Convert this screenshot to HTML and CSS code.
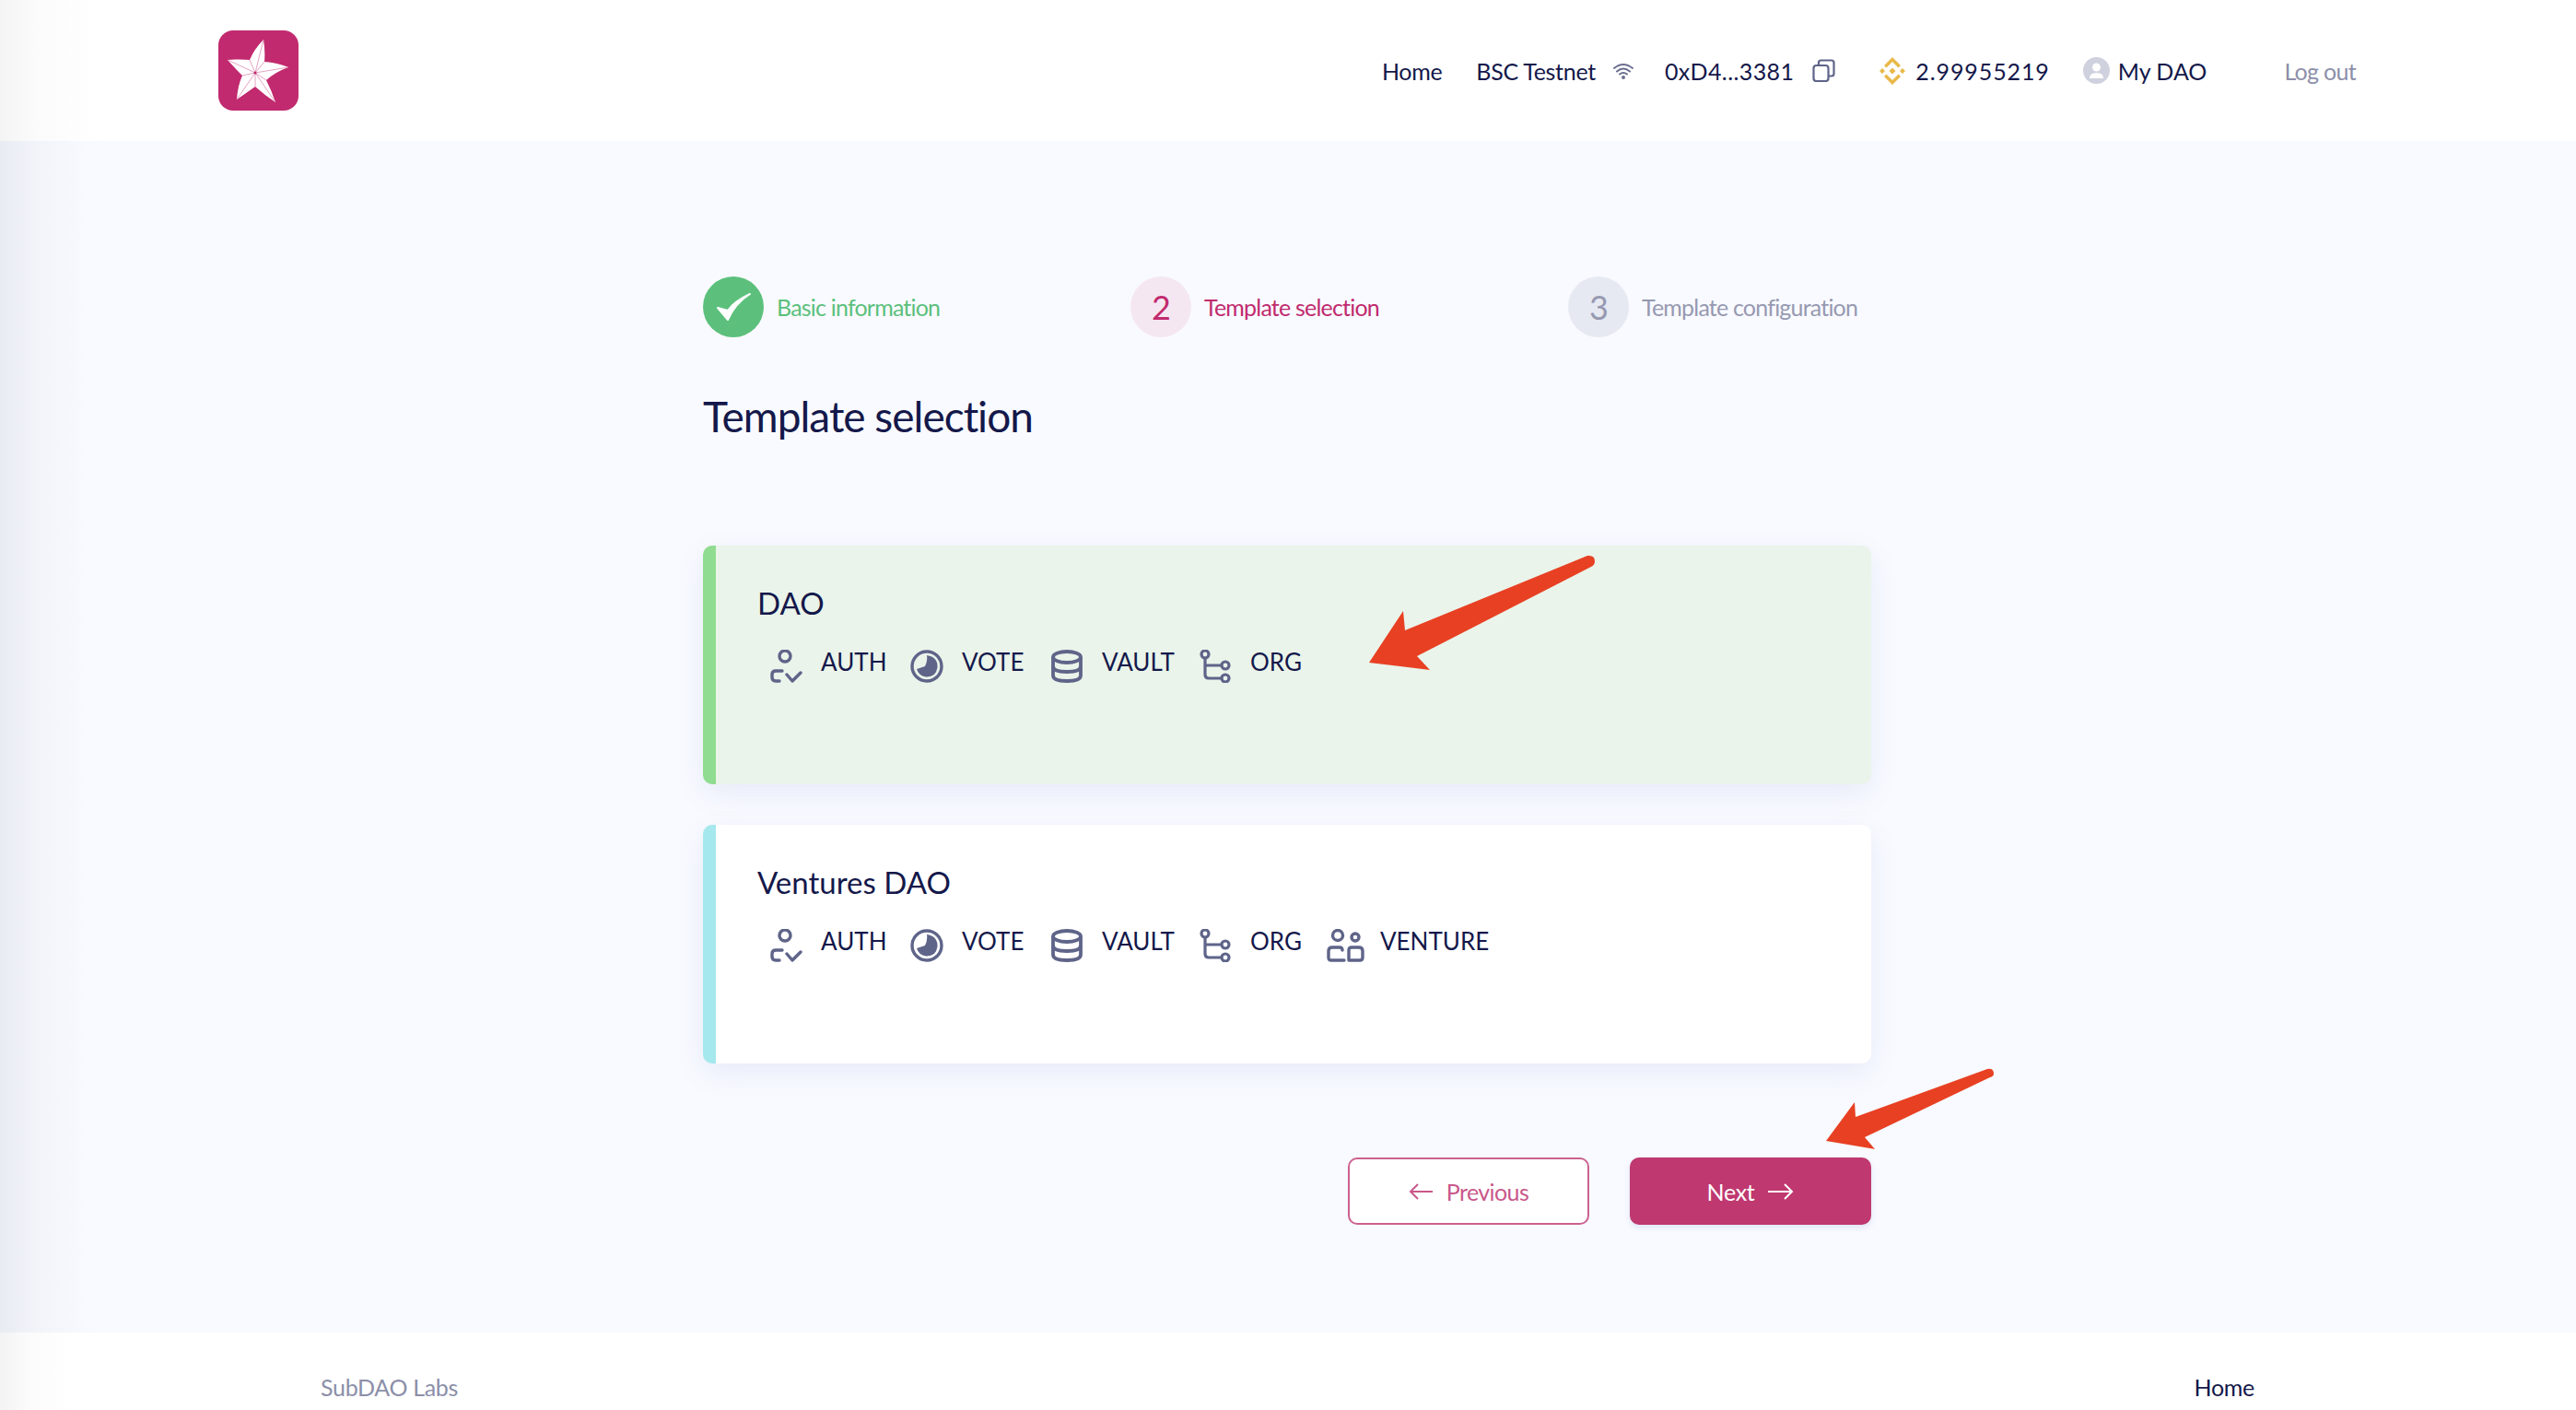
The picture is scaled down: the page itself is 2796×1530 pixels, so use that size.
FILE: index.html
```html
<!DOCTYPE html>
<html lang="en">
<head>
    <meta charset="UTF-8">
    <title>SubDAO</title>
    <link rel="stylesheet" href="styles.css">
</head>
<body>
    <div class="header">
        <svg class="logo" viewBox="0 0 87 87">
            <rect width="87" height="87" rx="16" fill="#c12a6e"/>
            <path d="M49 10Q51 22 50 34Q64 35 76 40Q62 45 52 54Q58 66 62 78Q50 70 40 61Q30 68 20 75Q21 60 26 49Q18 41 10 32Q23 31 34 32Q39 20 49 10Z" fill="#fff"/>
            <path d="M40 46L49 10M40 46L76 40M40 46L62 78M40 46L40 61M40 46L10 32M40 46L20 75M34 32L40 46L50 34M26 49L40 46L52 54" stroke="#dd8bb3" stroke-width=".8" fill="none"/>
            <circle cx="40" cy="46" r="1.500" fill="#c12a6e"/>
        </svg>
        <div class="nav">
            <span class="nav-home">Home</span>
            <span class="nav-net">BSC Testnet</span>
            <svg class="icon-wifi" viewBox="0 0 22 18" fill="none" stroke="#6a6e90" stroke-width="2" stroke-linecap="round">
                <path d="M1 6Q11 -2 21 6M4 9.500Q11 3.500 18 9.500M7 12.500Q11 9.500 15 12.500"/>
                <circle cx="11" cy="16" r="1" fill="#6a6e90"/>
            </svg>
            <span class="nav-addr">0xD4...3381</span>
            <svg class="icon-copy" viewBox="0 0 25 25" fill="none" stroke="#5f6489" stroke-width="2.200">
                <rect x="1.500" y="7" width="16" height="17" rx="3"/>
                <path d="M7 7V4Q7 1.500 9.500 1.500H21Q23.500 1.500 23.500 4V16Q23.500 18.500 21 18.500H17.500"/>
            </svg>
            <svg class="icon-bnb" viewBox="0 0 30 30" fill="#e9b949">
                <path d="M15 0L24 9L21.500 11.500L15 5L8.500 11.500L6 9ZM15 30L24 21L21.500 18.500L15 25L8.500 18.500L6 21Z"/>
                <path d="M15 11.500L18.500 15L15 18.500L11.500 15ZM4 12L7 15L4 18L1 15ZM26 12L29 15L26 18L23 15Z"/>
            </svg>
            <span class="nav-balance">2.99955219</span>
            <svg class="icon-avatar" viewBox="0 0 29 29">
                <circle cx="14.500" cy="14.500" r="14.500" fill="#cfd1de"/>
                <circle cx="14.500" cy="11" r="4.500" fill="#fff"/>
                <path d="M7 23Q7 17 14.500 17Q22 17 22 23Z" fill="#fff"/>
            </svg>
            <span class="nav-dao">My DAO</span>
            <span class="nav-logout">Log out</span>
        </div>
    </div>

    <div class="main">
        <div class="container">
            <div class="steps">
                <div class="step step-done">
                    <div class="step-num">
                        <svg viewBox="0 0 40 32" width="40" height="34"><path d="M3 17L14 30Q22 12 38 2Q21 10 14 20Z" fill="#fff" stroke="#fff" stroke-width="2" stroke-linejoin="round"/></svg>
                    </div>
                    <span>Basic information</span>
                </div>
                <div class="step step-active">
                    <div class="step-num">2</div>
                    <span>Template selection</span>
                </div>
                <div class="step step-todo">
                    <div class="step-num">3</div>
                    <span>Template configuration</span>
                </div>
            </div>

            <h1>Template selection</h1>

            <div class="card card-dao">
                <div class="card-name">DAO</div>
                <div class="chips">
                    <div class="chip chip-auth">
                        <svg class="chip-icon"><use href="#i-auth"/></svg>AUTH
                    </div>
                    <div class="chip chip-vote">
                        <svg class="chip-icon"><use href="#i-vote"/></svg>VOTE
                    </div>
                    <div class="chip chip-vault">
                        <svg class="chip-icon"><use href="#i-vault"/></svg>VAULT
                    </div>
                    <div class="chip chip-org">
                        <svg class="chip-icon"><use href="#i-org"/></svg>ORG
                    </div>
                </div>
            </div>

            <div class="card card-ventures">
                <div class="card-name">Ventures DAO</div>
                <div class="chips">
                    <div class="chip chip-auth">
                        <svg class="chip-icon"><use href="#i-auth"/></svg>AUTH
                    </div>
                    <div class="chip chip-vote">
                        <svg class="chip-icon"><use href="#i-vote"/></svg>VOTE
                    </div>
                    <div class="chip chip-vault">
                        <svg class="chip-icon"><use href="#i-vault"/></svg>VAULT
                    </div>
                    <div class="chip chip-org">
                        <svg class="chip-icon"><use href="#i-org"/></svg>ORG
                    </div>
                    <div class="chip chip-venture">
                        <svg class="chip-icon"><use href="#i-venture"/></svg>VENTURE
                    </div>
                </div>
            </div>

            <div class="buttons">
                <button class="btn btn-prev">
                    <svg width="26" height="20" viewBox="0 0 26 20" fill="none" stroke="currentColor" stroke-width="2"><path d="M26 10H2M10 2L2 10L10 18"/></svg>
                    Previous
                </button>
                <button class="btn btn-next">
                    Next
                    <svg width="28" height="20" viewBox="0 0 28 20" fill="none" stroke="currentColor" stroke-width="2"><path d="M0 10H26M18 2L26 10L18 18"/></svg>
                </button>
            </div>
        </div>
    </div>

    <div class="footer">
        <span class="footer-brand">SubDAO Labs</span>
        <span class="footer-home">Home</span>
    </div>

    <!-- red annotation arrows on top of the page -->
    <svg class="arrows" viewBox="0 0 2796 1530">
        <path d="M1486 719L1523 663L1525 684L1723 603Q1731 602 1731 609Q1731 613 1727 615L1538 712L1552 727Z" fill="#e84023"/>
        <path d="M1982 1238L2013 1196L2014 1212L2157 1160Q2164 1159 2164 1165Q2164 1168 2160 1169L2024 1234L2035 1247Z" fill="#e84023"/>
    </svg>

    <!-- icons used by the chips -->
    <svg class="icon-defs">
        <symbol id="i-auth" viewBox="0 0 36 36">
            <g fill="none" stroke="#5f6489" stroke-width="3.400" stroke-linecap="round" stroke-linejoin="round">
                <circle cx="17" cy="7" r="6"/>
                <path d="M14 23H7Q3 23 3 27V30Q3 34 7 34H11"/>
                <path d="M19 27L25 34L34 25"/>
            </g>
        </symbol>
        <symbol id="i-vote" viewBox="0 0 36 36">
            <circle cx="18" cy="18" r="16" fill="none" stroke="#5f6489" stroke-width="3.400"/>
            <path d="M18 6Q30 8 29.500 19Q28 30 17 29.500Q9 28 7 21L16 18Q19 12 18 6Z" fill="#5f6489"/>
        </symbol>
        <symbol id="i-vault" viewBox="0 0 36 36">
            <g fill="none" stroke="#5f6489" stroke-width="3.800">
                <ellipse cx="18" cy="8" rx="15" ry="6"/>
                <path d="M3 8V28Q3 34 18 34Q33 34 33 28V8"/>
                <path d="M3 18Q3 24 18 24Q33 24 33 18"/>
            </g>
        </symbol>
        <symbol id="i-org" viewBox="0 0 36 36">
            <g fill="none" stroke="#5f6489" stroke-width="3.200">
                <circle cx="7" cy="5" r="4"/>
                <circle cx="29" cy="17" r="4"/>
                <circle cx="29" cy="31" r="4"/>
                <path d="M7 9V27Q7 31 11 31H25M7 17H25"/>
            </g>
        </symbol>
        <symbol id="i-venture" viewBox="0 0 41 36">
            <g fill="none" stroke="#5f6489" stroke-width="3.400" stroke-linecap="round">
                <circle cx="12" cy="7" r="5.500"/>
                <circle cx="31" cy="9" r="4"/>
                <path d="M19 34H5Q2 34 2 31V24Q2 20 6 20H14Q17 20 17 23"/>
                <path d="M24 34H36Q39 34 39 31V24Q39 20 35 20H27Q24 20 24 23V34"/>
            </g>
        </symbol>
    </svg>
</body>
</html>
```

FILE: styles.css
```css
* {
    box-sizing: border-box;
}
html, body {
    margin: 0;
    height: 100%;
}
body {
    width: 2796px;
    height: 1530px;
    overflow: hidden;
    display: flex;
    flex-direction: column;
    position: relative;
    font-family: "Lato", sans-serif;
    color: #14184a;
    background-color: #f8faff;
}
.header {
    height: 153px;
    flex: none;
    display: flex;
    align-items: center;
    justify-content: space-between;
    padding: 0 239px 0 237px;
    background: linear-gradient(90deg, #f4f4f4 0, #fbfbfb 40px, #ffffff 110px);
}
.logo {
    width: 87px;
    height: 87px;
    margin-top: -1px;
}
.nav {
    display: flex;
    align-items: center;
    font-size: 25px;
    letter-spacing: -0.3px;
    line-height: 30px;
}
.nav svg {
    flex: none;
}
.nav-net {
    margin-left: 37px;
}
.icon-wifi {
    width: 22px;
    height: 18px;
    margin-left: 19px;
}
.nav-addr {
    margin-left: 34px;
    letter-spacing: 0.4px;
}
.icon-copy {
    width: 25px;
    height: 25px;
    margin-left: 20px;
}
.icon-bnb {
    width: 30px;
    height: 30px;
    margin-left: 47px;
}
.nav-balance {
    margin-left: 10px;
    letter-spacing: 0.9px;
}
.icon-avatar {
    width: 29px;
    height: 29px;
    margin-left: 36px;
}
.nav-dao {
    margin-left: 9px;
    letter-spacing: 0px;
}
.nav-logout {
    margin-left: 84px;
    color: #8c8fa9;
    letter-spacing: -0.7px;
}
.main {
    flex: 1;
    background: linear-gradient(90deg, #e9ebf3 0, #f2f4fa 40px, #f8faff 100px);
}
.container {
    width: 1268px;
    margin-left: 763px;
    padding-top: 147px;
}
.steps {
    display: grid;
    grid-template-columns: 464px 475px 1fr;
}
.step {
    display: flex;
    align-items: center;
    font-size: 25px;
    letter-spacing: -0.8px;
}
.step-num {
    width: 66px;
    height: 66px;
    border-radius: 50%;
    margin-right: 14px;
    display: flex;
    align-items: center;
    justify-content: center;
    font-size: 36px;
}
.step-done {
    color: #5cc07c;
}
.step-done .step-num {
    background-color: #5cc07c;
}
.step-active {
    color: #c12a6e;
}
.step-active .step-num {
    background-color: #f5e7f1;
}
.step-todo {
    color: #9799b1;
}
.step-todo .step-num {
    background-color: #e6e9f1;
}
h1 {
    font-size: 46px;
    font-weight: 400;
    line-height: 56px;
    letter-spacing: -1px;
    margin: 58px 0 112px;
}
.card {
    height: 259px;
    border-radius: 10px;
    border-left: 14px solid;
    padding: 42px 0 0 45px;
    margin-bottom: 44px;
    box-shadow: 0 10px 30px rgba(90, 110, 190, 0.1);
}
.card-dao {
    background-color: #eaf4ea;
    border-left-color: #90dc90;
}
.card-ventures {
    background-color: #ffffff;
    border-left-color: #a5e8ee;
}
.card-name {
    font-size: 33px;
    line-height: 40px;
}
.chips {
    display: flex;
    margin-top: 26px;
    margin-left: 13px;
    font-size: 26px;
    line-height: 36px;
}
.chip {
    display: flex;
    align-items: flex-start;
}
.chip-icon {
    width: 36px;
    height: 36px;
    flex: none;
    margin-top: 5px;
    margin-right: 20px;
}
.chip-auth {
    width: 153px;
}
.chip-vote {
    width: 152px;
}
.chip-vault {
    width: 161px;
}
.chip-org {
    width: 139px;
}
.chip-venture .chip-icon {
    width: 41px;
    margin-right: 17px;
}
.buttons {
    display: flex;
    justify-content: flex-end;
    gap: 44px;
    margin-top: 102px;
}
.btn {
    width: 262px;
    height: 73px;
    border-radius: 10px;
    display: flex;
    align-items: center;
    justify-content: center;
    gap: 15px;
    font-family: "Lato", sans-serif;
    font-size: 25px;
    letter-spacing: -0.3px;
    cursor: pointer;
}
.btn-prev {
    background-color: #ffffff;
    color: #c9588a;
    border: 2px solid #cc6190;
    letter-spacing: -0.6px;
}
.btn-next {
    background-color: #bf386f;
    color: #ffffff;
    border: none;
    box-shadow: 0 3px 6px rgba(90, 110, 190, 0.15);
}
.footer {
    height: 84px;
    flex: none;
    display: flex;
    justify-content: space-between;
    padding: 44px 349px 0 348px;
    font-size: 25px;
    letter-spacing: -0.3px;
    line-height: 30px;
    background: linear-gradient(90deg, #f2f3f2 0, #fafbfa 30px, #ffffff 80px);
}
.footer-brand {
    color: #8c8fa9;
}
.arrows {
    position: absolute;
    left: 0;
    top: 0;
    width: 2796px;
    height: 1530px;
    pointer-events: none;
}
.icon-defs {
    position: absolute;
    width: 0;
    height: 0;
}
```
